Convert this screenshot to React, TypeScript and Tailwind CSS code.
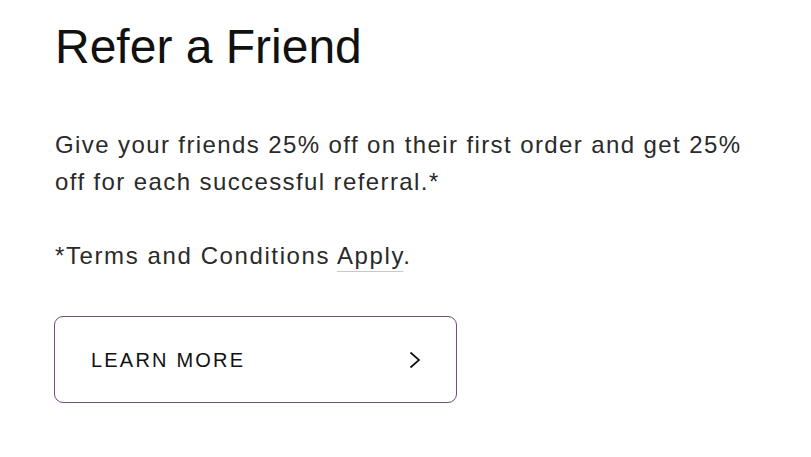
export default function App() {
  return (
    <div className="min-h-[457px] bg-white pl-[55px] pt-[17px] font-['Liberation_Sans',Arial,sans-serif] text-[#1a1a1a]">
      <h1 className="text-[48px] leading-[60px] font-normal text-[#111]">Refer a Friend</h1>

      <p className="mt-[49px] w-[720px] text-[24px] leading-[37px] tracking-[1.4px] text-[#2a2a2a]">
        Give your friends 25% off on their first order and get 25% off for each successful referral.*
      </p>

      <p className="mt-[37px] text-[24px] leading-[37px] tracking-[1.6px] text-[#2a2a2a]">
        *Terms and Conditions{" "}
        <span className="underline decoration-[#c8c8c8] decoration-1 underline-offset-[7px]">Apply</span>.
      </p>

      <button className="mt-[42px] -ml-px flex h-[87px] w-[403px] items-center justify-between rounded-[9px] border border-[#6e5070] pl-[36px] pr-[35px]">
        <span className="text-[20px] tracking-[2.2px] text-[#111]">LEARN MORE</span>
        <svg width="12" height="18" viewBox="0 0 12 18" fill="none" stroke="#111" strokeWidth="1.7">
          <path d="M1.5 1.5 L10 9 L1.5 16.5" />
        </svg>
      </button>
    </div>
  )
}
